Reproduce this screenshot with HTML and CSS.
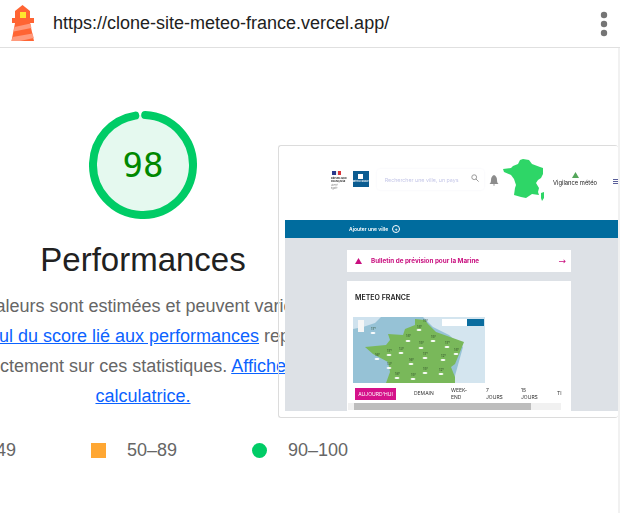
FILE: index.html
```html
<!DOCTYPE html>
<html lang="fr">
<head>
<meta charset="utf-8">
<title>Lighthouse</title>
<link rel="stylesheet" href="styles.css">
</head>
<body>
<header class="topbar">
  <svg class="logo" width="46" height="46" viewBox="0 0 46 46">
    <polygon points="22.5,5 30,11 30,18 15,18 15,11" fill="#ff6433"/>
    <rect x="12" y="18" width="22" height="5" fill="#ff6433"/>
    <polygon points="15,23 30,23 34,41 11.5,41" fill="#ff6433"/>
    <polygon points="14.5,27 30.5,23.5 31.4,28 13.7,31.5" fill="#ff9a7d"/>
    <polygon points="12.6,37 32.6,33.5 33.8,38 20,41 11.5,41" fill="#ff9a7d"/>
    <rect x="20" y="12" width="6" height="6" fill="#ffe62e"/>
  </svg>
  <span class="url">https://clone-site-meteo-france.vercel.app/</span>
  <svg class="kebab" width="8" height="26" viewBox="0 0 8 26">
    <circle cx="4" cy="4" r="3.2" fill="#757575"/>
    <circle cx="4" cy="13" r="3.2" fill="#757575"/>
    <circle cx="4" cy="22" r="3.2" fill="#757575"/>
  </svg>
</header>

<main class="page">
  <section class="column">
    <svg class="gauge" width="108" height="108" viewBox="0 0 108 108">
      <circle cx="54" cy="54" r="50" fill="#e5f9ef"/>
      <circle cx="54" cy="54" r="50" fill="none" stroke="#00cc66" stroke-width="8" stroke-linecap="round" stroke-dasharray="303.7 314.2" transform="rotate(-87.5 54 54)"/>
      <text x="54" y="66" text-anchor="middle" class="score">98</text>
    </svg>
    <h1 class="title">Performances</h1>
    <p class="desc">Les valeurs sont estimées et peuvent varier. Le&nbsp;<br><a href="#">calcul du score lié aux performances</a> repose<br>directement sur ces statistiques. <a href="#">Afficher la&nbsp;<br>calculatrice.</a></p>
    <ul class="legend">
      <li class="legend-item"><svg class="legend-icon" width="15" height="15" viewBox="0 0 15 15"><polygon points="7.5,0 15,15 0,15" fill="#ff3333"/></svg>0–49</li>
      <li class="legend-item"><span class="legend-square"></span>50–89</li>
      <li class="legend-item"><span class="legend-dot"></span>90–100</li>
    </ul>
  </section>

  <aside class="shot">
    <div class="shot-inner">
      <div class="site-head">
        <div class="rf">
          <svg width="18" height="6" viewBox="0 0 18 6"><rect x="1" width="4" height="4" fill="#2a3a8c"/><rect x="5" width="2" height="4" fill="#eee"/><rect x="7" width="3" height="4" fill="#d9343a"/></svg>
          <span class="rf-text">RÉPUBLIQUE FRANÇAISE</span>
          <span class="rf-sub">Liberté<br>Égalité</span>
        </div>
        <div class="mf-box"><b class="mf-sq"></b><span>MÉTÉO FRANCE</span></div>
        <div class="search"><span>Rechercher une ville, un pays</span>
          <svg width="8" height="8" viewBox="0 0 8 8"><circle cx="3.2" cy="3.2" r="2.4" fill="none" stroke="#9a9a9a"/><line x1="5" y1="5" x2="7.6" y2="7.6" stroke="#9a9a9a"/></svg>
        </div>
        <svg class="bell" width="10" height="11" viewBox="0 0 10 11"><path d="M5 0C3 1 2 2.5 2 5C2 7 1.500 8 .5 9H9.500C8.500 8 8 7 8 5C8 2.500 7 1 5 0ZM4 9.500H6L5 11Z" fill="#8c8c8c"/></svg>
        <svg class="france" width="46" height="50" viewBox="0 0 46 50">
          <path d="M21 2L27 3L30 7L38 10L41 11L41 17L39 21L36 23L34 26L37 31L36 35L37 38L30 37L27 39L24 41L19 40L12 38L13 31L14 28L12 22L9 18L2 15L1 12L9 11L11 9L16 7L18 3Z" fill="#2ed667"/>
          <path d="M39 36L42 35L42 41L40 44L39 41Z" fill="#2ed667"/>
        </svg>
        <div class="vig">
          <svg width="7" height="6" viewBox="0 0 7 6"><polygon points="3.500,0 7,6 0,6" fill="#54a65a"/></svg>
          <span>Vigilance météo</span>
        </div>
        <div class="burger"><i></i><i></i><i></i></div>
      </div>
      <div class="site-nav"><span>Ajouter une ville</span><i class="plus">+</i></div>
      <div class="site-body">
        <div class="card alert">
          <svg width="7" height="6" viewBox="0 0 7 6"><polygon points="3.500,0 7,6 0,6" fill="#c90f7f"/></svg>
          <span class="alert-text">Bulletin de prévision pour la Marine</span>
          <span class="arrow">→</span>
        </div>
        <div class="card forecast">
          <h2 class="forecast-title">METEO FRANCE</h2>
          <svg class="map" width="132" height="66" viewBox="0 0 132 66">
            <rect width="132" height="66" fill="#96c2d6"/>
            <polygon points="0,0 28,0 22,6 10,10 0,12" fill="#cfe2ee"/>
            <polygon points="70,0 132,0 132,66 100,66 110,30 96,18 80,10" fill="#d4e5ef"/>
            <polygon points="62,2 72,3 75,7 83,15 97,20 111,25 107,35 102,47 98,50 102,60 102,66 33,66 37,55 35,45 20,37 12,30 33,28 37,23 35,17 50,18 52,12 62,8" fill="#79b85a"/>
            <g fill="#fff">
              <ellipse cx="66" cy="13" rx="2.500" ry="1"/><ellipse cx="55" cy="24" rx="2.500" ry="1"/><ellipse cx="80" cy="24" rx="2.500" ry="1"/><ellipse cx="94" cy="30" rx="2.500" ry="1"/><ellipse cx="68" cy="31" rx="2.500" ry="1"/><ellipse cx="48" cy="36" rx="2.500" ry="1"/><ellipse cx="36" cy="38" rx="2.500" ry="1"/><ellipse cx="24" cy="42" rx="2.500" ry="1"/><ellipse cx="72" cy="41" rx="2.500" ry="1"/><ellipse cx="90" cy="43" rx="2.500" ry="1"/><ellipse cx="58" cy="47" rx="2.500" ry="1"/><ellipse cx="36" cy="51" rx="2.500" ry="1"/><ellipse cx="72" cy="56" rx="2.500" ry="1"/><ellipse cx="88" cy="57" rx="2.500" ry="1"/><ellipse cx="44" cy="61" rx="2.500" ry="1"/><ellipse cx="60" cy="62" rx="2.500" ry="1"/><ellipse cx="103" cy="37" rx="2.500" ry="1"/><ellipse cx="20" cy="16" rx="2.500" ry="1"/>
            </g>
            <g class="temps">
              <text x="70" y="5">15°</text><text x="64" y="11">14°</text><text x="53" y="20">14°</text><text x="78" y="21">15°</text><text x="92" y="27">17°</text><text x="66" y="27">15°</text><text x="46" y="33">13°</text><text x="34" y="35">17°</text><text x="22" y="39">16°</text><text x="70" y="38">17°</text><text x="88" y="40">12°</text><text x="56" y="44">16°</text><text x="34" y="48">13°</text><text x="70" y="53">15°</text><text x="86" y="54">12°</text><text x="42" y="58">18°</text><text x="58" y="59">15°</text><text x="101" y="34">14°</text><text x="18" y="13">17°</text>
            </g>
            <rect x="5" y="3" width="6" height="12" fill="#f6f6f6"/>
            <rect x="89" y="2" width="25" height="7" fill="#fff"/>
            <rect x="114" y="2" width="17" height="7" fill="#0b6d9f"/>
          </svg>
          <div class="tabs">
            <span class="tab tab-active">AUJOURD'HUI</span>
            <span class="tab tab-a">DEMAIN</span>
            <span class="tab tab-b">WEEK-<br>END</span>
            <span class="tab tab-c">7<br>JOURS</span>
            <span class="tab tab-d">15<br>JOURS</span>
            <span class="tab">TI</span>
          </div>
          <div class="tabscroll"><i class="tabthumb"></i></div>
        </div>
      </div>
    </div>
  </aside>
  <div class="scrollbar"></div>
</main>
</body>
</html>
```
FILE: styles.css
```css
html, body {
  margin: 0;
  padding: 0;
  height: 100%;
  overflow: hidden;
  background: #fff;
  font-family: "Liberation Sans", Arial, sans-serif;
}

.topbar {
  height: 47px;
  box-sizing: content-box;
  display: flex;
  align-items: center;
  border-bottom: 1px solid #e0e0e0;
}
.logo { flex: none; align-self: flex-start; }
.url {
  margin-left: 7px;
  font-size: 18px;
  color: #212121;
  flex: 1;
}
.kebab { margin-right: 12px; flex: none; }

.page {
  position: relative;
  height: 465px;
  overflow: hidden;
}
.column {
  width: 570px;
  margin-left: -142px;
  display: flex;
  flex-direction: column;
  align-items: center;
  padding-top: 63px;
}
.gauge { display: block; }
.score {
  font-family: "DejaVu Sans Mono", monospace;
  font-size: 34px;
  fill: #008800;
}
.title {
  margin: 21px 0 0;
  font-size: 33px;
  font-weight: 400;
  line-height: 40px;
  color: #212121;
}
.desc {
  margin: 11px 0 0;
  font-size: 18px;
  line-height: 30px;
  color: #666;
  text-align: center;
  white-space: nowrap;
}
.desc a { color: #0b62ff; }
.legend {
  list-style: none;
  margin: 24px 0 0 2px;
  padding: 0;
  display: flex;
  gap: 75px;
  font-size: 18px;
  line-height: 30px;
  color: #666;
}
.legend-item { display: flex; align-items: center; gap: 21px; }
.legend-icon { display: block; }
.legend-square { width: 15px; height: 15px; background: #ffa733; }
.legend-dot { width: 15px; height: 15px; border-radius: 50%; background: #00cc66; }

.scrollbar {
  position: absolute;
  top: 0;
  right: 0;
  width: 2px;
  height: 100%;
  background: #f1f1f1;
}

.shot {
  position: absolute;
  left: 278px;
  top: 97px;
  width: 340px;
  height: 273px;
  box-sizing: border-box;
  border: 1px solid #dcdcdc;
  border-right: 0;
  border-radius: 3px;
  padding: 0 0 6px 6px;
  overflow: hidden;
}
.shot-inner {
  height: 100%;
  background: #fff;
  filter: blur(0.45px);
  display: flex;
  flex-direction: column;
  font-family: Inter, "Liberation Sans", sans-serif;
  overflow: hidden;
}

.site-head {
  height: 74px;
  flex: none;
  display: flex;
  align-items: flex-start;
  padding-left: 46px;
  box-sizing: border-box;
}
.rf {
  width: 19px;
  margin-top: 25px;
  display: flex;
  flex-direction: column;
  font-size: 2.500px;
  line-height: 3px;
  color: #222;
}
.rf-text { font-weight: 700; }
.rf-sub { color: #777; font-size: 2px; line-height: 2.500px; margin-top: 1px; }
.mf-box {
  width: 16px;
  height: 16px;
  margin: 25px 0 0 3px;
  background: #0b5c91;
  color: #fff;
  font-size: 2px;
  line-height: 2.500px;
  text-align: center;
  font-weight: 700;
  display: flex;
  flex-direction: column;
  align-items: center;
  padding-top: 3px;
  box-sizing: border-box;
}
.mf-sq { width: 5px; height: 5px; background: #fff; margin-bottom: 1px; }
.search {
  width: 108px;
  height: 21px;
  margin: 23px 0 0 8px;
  padding: 0 5px 4px 8px;
  box-sizing: border-box;
  display: flex;
  align-items: center;
  justify-content: space-between;
  font-size: 5.300px;
  color: #c5c7e8;
  white-space: nowrap;
  border-radius: 3px;
  box-shadow: 0 0 2px rgba(90, 90, 160, 0.08);
}
.search span { margin-top: 4px; }
.bell { margin: 29px 0 0 5px; flex: none; }
.france { margin: 11px 0 0 3px; flex: none; }
.vig {
  width: 44px;
  margin: 26px 0 0 5px;
  display: flex;
  flex-direction: column;
  align-items: center;
  gap: 1px;
  font-size: 5.800px;
  line-height: 7px;
  color: #222;
  white-space: nowrap;
}
.burger {
  margin: 33px 0 0 16px;
  display: flex;
  flex-direction: column;
  gap: 1px;
  width: 5px;
  flex: none;
}
.burger i { display: block; height: 1px; background: #5a5f9a; }

.site-nav {
  height: 18px;
  flex: none;
  background: #006c9e;
  box-sizing: border-box;
  padding-left: 64px;
  display: flex;
  align-items: center;
  gap: 4px;
  color: #fff;
  font-size: 5px;
  font-weight: 600;
}
.plus {
  width: 6px;
  height: 6px;
  border: 1px solid #fff;
  border-radius: 50%;
  font-style: normal;
  font-size: 5px;
  line-height: 6px;
  text-align: center;
}

.site-body {
  flex: 1;
  background: #dde1e6;
  padding: 12px 0 0 62px;
  display: flex;
  flex-direction: column;
  gap: 9px;
  overflow: hidden;
}
.card { width: 224px; background: #fff; box-sizing: border-box; flex: none; }
.alert {
  height: 22px;
  padding: 0 5px 0 8px;
  display: flex;
  align-items: center;
  color: #c90f7f;
  font-size: 6.300px;
  font-weight: 700;
}
.alert-text { margin-left: 9px; flex: 1; }
.arrow { font-size: 9px; font-weight: 400; font-family: "DejaVu Sans", sans-serif; }
.forecast { height: 130px; padding: 12px 0 0 8px; }
.forecast-title {
  margin: 0;
  font-size: 7px;
  line-height: 10px;
  font-weight: 600;
  color: #222;
}
.map { display: block; margin: 14px 0 0 -2px; }
.temps { font-size: 3.500px; fill: #2d4a2a; }
.tabs {
  display: flex;
  align-items: center;
  height: 13px;
  margin-top: 4px;
  font-size: 5px;
  line-height: 7px;
  color: #333;
  white-space: nowrap;
}
.tab { flex: none; }
.tab-active {
  width: 41px;
  height: 12px;
  background: #d5128a;
  color: #fff;
  font-size: 5px;
  line-height: 12px;
  text-align: center;
  margin-right: 18px;
}
.tab-a { width: 37px; }
.tab-b { width: 35px; }
.tab-c { width: 35px; }
.tab-d { width: 36px; }
.tabscroll {
  margin: 3px 0 0 -7px;
  width: 213px;
  height: 7px;
  background: #f1f1f1;
  padding: 0 30px 0 6px;
  box-sizing: border-box;
}
.tabthumb { display: block; height: 7px; background: #bdbdbd; }
```
